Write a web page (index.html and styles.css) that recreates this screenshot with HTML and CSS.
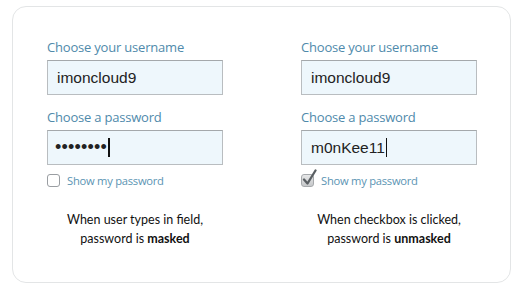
FILE: index.html
```html
<!DOCTYPE html>
<html lang="en">
<head>
    <meta charset="UTF-8">
    <title>Show password</title>
    <link rel="stylesheet" href="styles.css">
</head>
<body>
    <div class="card">
        <!-- masked state -->
        <section class="demo">
            <label class="field-label">Choose your username</label>
            <div class="field">imoncloud9</div>
            <label class="field-label">Choose a password</label>
            <div class="field field-dots">&bull;&bull;&bull;&bull;&bull;&bull;&bull;&bull;<span class="caret"></span></div>
            <div class="check-row">
                <span class="box"></span>
                <span>Show my password</span>
            </div>
            <p class="caption">When user types in field,<br>password is <b>masked</b></p>
        </section>

        <!-- unmasked state -->
        <section class="demo">
            <label class="field-label">Choose your username</label>
            <div class="field">imoncloud9</div>
            <label class="field-label">Choose a password</label>
            <div class="field">m0nKee11<span class="caret"></span></div>
            <div class="check-row">
                <span class="box checked">
                    <svg width="18" height="18" viewBox="0 0 18 18"><path d="M3 10.5 L6.5 14.5 L14.5 1.5" fill="none" stroke="#5a5f63" stroke-width="2.3" stroke-linecap="round" stroke-linejoin="round"/></svg>
                </span>
                <span>Show my password</span>
            </div>
            <p class="caption">When checkbox is clicked,<br>password is <b>unmasked</b></p>
        </section>
    </div>
</body>
</html>
```

FILE: styles.css
```css
* { margin: 0; padding: 0; box-sizing: border-box; }
body {
    background: #fff;
    font-family: 'Open Sans', sans-serif;
}

.card {
    margin: 6px 12px 0;
    width: 499px;
    height: 277px;
    border: 1px solid #e3e5e6;
    border-radius: 14px;
    padding: 30px 33px 0 34px;
    display: grid;
    grid-template-columns: 176px 176px;
    column-gap: 78px;
}

.field-label {
    display: block;
    font-size: 13px;
    letter-spacing: -0.2px;
    line-height: 20px;
    color: #4f8aab;
    margin-bottom: 3px;
}

.field {
    position: relative;
    height: 35px;
    background: #eef7fc;
    border: 1px solid #b9bdc0;
    border-top-color: #a4a8ab;
    padding: 0 9px;
    font-family: 'Liberation Sans', sans-serif;
    font-size: 15.5px;
    line-height: 33px;
    color: #222;
    margin-bottom: 12px;
    display: flex;
    align-items: center;
}
.field-dots { font-size: 18px; letter-spacing: 0.2px; padding-left: 7px; }

.caret {
    display: inline-block;
    width: 1.5px;
    height: 19px;
    background: #111;
    margin-left: 1px;
}

.check-row {
    display: flex;
    align-items: center;
    gap: 7px;
    margin-top: -4px;
    font-size: 11.2px;
    letter-spacing: -0.25px;
    color: #5b94b3;
}
.box {
    position: relative;
    width: 13px;
    height: 13px;
    border: 1px solid #9a9ea2;
    border-radius: 3px;
    background: #fff;
}
.box.checked {
    background: linear-gradient(#e6e7e8, #c6c8ca);
    border-color: #a6a9ac;
}
.box svg { position: absolute; left: -1px; top: -6px; }

.caption {
    text-align: center;
    font-family: 'Lato', sans-serif;
    font-size: 12.5px;
    line-height: 19px;
    color: #111;
    margin-top: 22px;
}
.caption b { font-weight: 700; }
```
